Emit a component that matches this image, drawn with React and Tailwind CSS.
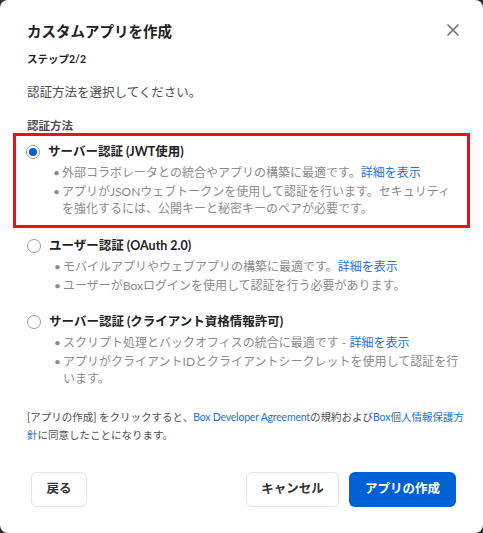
import { useState } from 'react';

const options = [
  {
    id: 'jwt',
    title: 'サーバー認証 (JWT使用)',
    bullets: [
      ['外部コラボレータとの統合やアプリの構築に最適です。', '詳細を表示'],
      ['アプリがJSONウェブトークンを使用して認証を行います。セキュリティを強化するには、公開キーと秘密キーのペアが必要です。'],
    ],
  },
  {
    id: 'oauth',
    title: 'ユーザー認証 (OAuth 2.0)',
    bullets: [
      ['モバイルアプリやウェブアプリの構築に最適です。', '詳細を表示'],
      ['ユーザーがBoxログインを使用して認証を行う必要があります。'],
    ],
  },
  {
    id: 'ccg',
    title: 'サーバー認証 (クライアント資格情報許可)',
    bullets: [
      ['スクリプト処理とバックオフィスの統合に最適です - ', '詳細を表示'],
      ['アプリがクライアントIDとクライアントシークレットを使用して認証を行います。'],
    ],
  },
];

function Radio({ checked }) {
  return (
    <span className="flex h-[14px] w-[14px] shrink-0 items-center justify-center rounded-full border border-[#9a9a9a] bg-white">
      {checked && <span className="h-[8px] w-[8px] rounded-full bg-[#0061d5]" />}
    </span>
  );
}

function Option({ opt, checked, onSelect }) {
  return (
    <div>
      <button onClick={onSelect} className="flex h-[18px] items-center gap-[8px] text-left">
        <Radio checked={checked} />
        <span className="text-[12.5px] font-bold leading-[18px] text-[#222]">{opt.title}</span>
      </button>
      <ul className="-mr-[4px] ml-[26px] mt-[3px] flex flex-col gap-[2px]">
        {opt.bullets.map((b, i) => (
          <li key={i} className="flex text-[12px] leading-[17px] text-[#8c8c8c]">
            <span className="w-[10px] shrink-0 pl-[1px]">•</span>
            <span>
              {b[0]}
              {b[1] && <a className="text-[#2a6fd2]">{b[1]}</a>}
            </span>
          </li>
        ))}
      </ul>
    </div>
  );
}

export default function App() {
  const [selected, setSelected] = useState('jwt');

  return (
    <div className="min-h-screen bg-[#2e2e2e]" style={{ fontFamily: 'Lato, "Noto Sans CJK JP", sans-serif' }}>
      <div className="flex h-[533px] w-[483px] flex-col rounded-[8px] bg-white px-[27px] pt-[20px]">
        <div className="flex items-start justify-between">
          <h1 className="text-[14.5px] font-bold leading-[24px] text-[#222]">カスタムアプリを作成</h1>
          <button className="-mr-[6px] mt-[1px] p-[2px] text-[#707070]">
            <svg width="14" height="14" viewBox="0 0 14 14" fill="none" stroke="currentColor" strokeWidth="1.6" strokeLinecap="round">
              <path d="M2 2l10 10M12 2L2 12" />
            </svg>
          </button>
        </div>
        <p className="mt-[7px] text-[10.5px] font-bold leading-[16px] text-[#222]">ステップ2/2</p>
        <p className="mt-[17px] text-[12.5px] leading-[18px] text-[#4e4e4e]">認証方法を選択してください。</p>
        <p className="mt-[17px] text-[11.5px] font-semibold leading-[14px] text-[#4e4e4e]">認証方法</p>

        <div className="-mx-[14px] border-[3px] border-[#e3141c] px-[10px] pb-[8px] pt-[7px]">
          <Option opt={options[0]} checked={selected === 'jwt'} onSelect={() => setSelected('jwt')} />
        </div>
        <div className="mt-[9px]">
          <Option opt={options[1]} checked={selected === 'oauth'} onSelect={() => setSelected('oauth')} />
        </div>
        <div className="mt-[19px]">
          <Option opt={options[2]} checked={selected === 'ccg'} onSelect={() => setSelected('ccg')} />
        </div>

        <p className="-mr-[12px] mt-[21px] text-[10.5px] leading-[18px] text-[#4e4e4e]">
          [アプリの作成] をクリックすると、<a className="tracking-[-0.2px] text-[#2a6fd2]">Box Developer Agreement</a>の規約および<a className="text-[#2a6fd2]">Box個人情報保護方針</a>に同意したことになります。
        </p>

        <div className="mt-[28px] flex items-center justify-between">
          <button className="ml-[4px] h-[35px] w-[56px] rounded-[6px] border border-[#e4e4e4] text-[12.5px] font-bold text-[#333]">
            戻る
          </button>
          <div className="flex gap-[10px]">
            <button className="h-[35px] w-[93px] rounded-[6px] border border-[#e4e4e4] text-[12.5px] font-bold text-[#333]">
              キャンセル
            </button>
            <button className="h-[35px] w-[107px] rounded-[6px] bg-[#0061d5] text-[12.5px] font-bold text-white">
              アプリの作成
            </button>
          </div>
        </div>
      </div>
    </div>
  );
}
